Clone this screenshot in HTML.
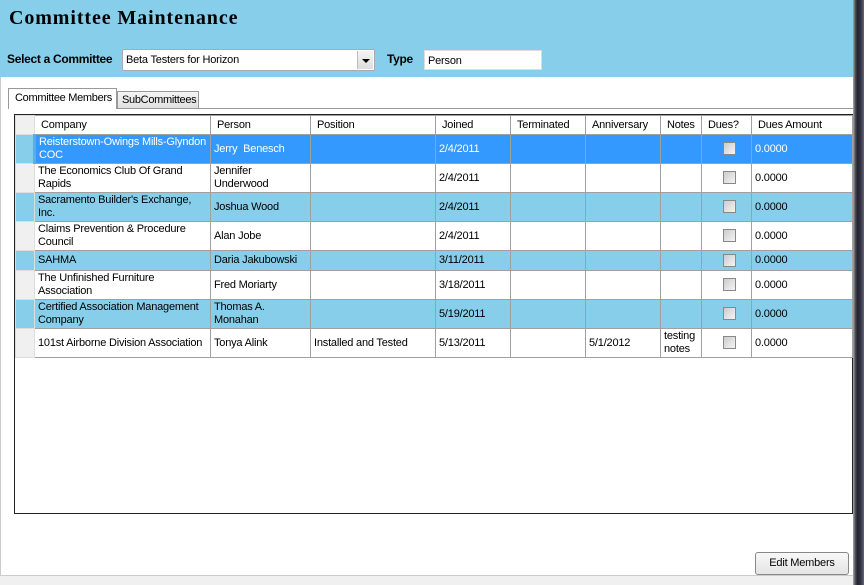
<!DOCTYPE html>
<html><head><meta charset="utf-8"><style>
*{margin:0;padding:0;box-sizing:border-box}
body{width:864px;height:585px;background:#fff;position:relative;overflow:hidden;font-family:"Liberation Sans",sans-serif;font-size:11px;color:#000}
.a{position:absolute}
#hdr{left:0;top:0;width:855px;height:77px;background:#87ceeb}
h1{position:absolute;left:9px;top:7px;font-family:"Liberation Serif",serif;font-size:20px;font-weight:bold;letter-spacing:.9px}
.lbl{font-weight:bold;font-size:12px;letter-spacing:-.3px}
.box{background:#fff;border:1px solid #aaa;font-size:11px;padding:4px 3px 0;letter-spacing:-.2px}
table{border-collapse:collapse;table-layout:fixed;position:absolute;left:15px;top:115px}
td,th{border:1px solid #a0a0a0;font-weight:normal;text-align:left;padding:0 3px;vertical-align:middle;line-height:13px;overflow:hidden;letter-spacing:-.2px}
th{height:19px;background:#fff;padding-left:6px}
td.s{background:#f0f0f0;border-color:#ddd}
tr.b td{background:#87ceeb}
tr.sel td{background:#3399ff;color:#fff}
tr.sel td.s{background:#87ceeb;border-right:3px solid #5aaee0}
.cb{display:inline-block;width:13px;height:13px;border:1px solid #888;background:linear-gradient(135deg,#ccc,#f4f4f4);margin-left:18px;vertical-align:middle}
</style></head><body>
<div id="hdr" class="a">
<h1>Committee Maintenance</h1>
<div class="a lbl" style="left:7px;top:52px">Select a Committee</div>
<div class="a box" style="left:122px;top:49px;width:253px;height:22px;border-radius:2px">Beta Testers for Horizon
<div class="a" style="right:1px;top:1px;width:16px;height:18px;background:linear-gradient(#f4f4f4,#ddd);border-left:1px solid #bbb"><div class="a" style="left:4px;top:8px;border-left:4px solid transparent;border-right:4px solid transparent;border-top:4px solid #000"></div></div></div>
<div class="a lbl" style="left:387px;top:52px">Type</div>
<div class="a box" style="left:424px;top:50px;width:118px;height:20px;border-color:#ddd">Person</div>
</div>
<div class="a" style="left:0;top:77px;width:1px;height:508px;background:#ccc"></div>
<div class="a" style="left:853px;top:0;width:11px;height:585px;background:linear-gradient(90deg,#aaa,#555 20%,#223 40%,#334 70%,#667)"></div>
<div class="a" style="left:0;top:575px;width:853px;height:10px;background:#f0f0f0;border-top:1px solid #ccc"></div>
<div class="a" style="left:8px;top:108px;width:845px;height:467px;border-top:1px solid #999"></div>
<div class="a" style="left:8px;top:88px;width:109px;height:21px;background:#fff;border:1px solid #999;border-bottom:none;padding:3px 6px;letter-spacing:-.3px;white-space:nowrap">Committee Members</div>
<div class="a" style="left:117px;top:91px;width:82px;height:18px;background:linear-gradient(#f4f4f4,#e0e0e0);border:1px solid #999;padding:2px 4px;letter-spacing:-.3px;white-space:nowrap">SubCommittees</div>
<div class="a" style="left:14px;top:114px;width:839px;height:400px;border:1px solid #222"></div>
<table>
<colgroup><col style="width:19px"><col style="width:176px"><col style="width:100px"><col style="width:125px"><col style="width:75px"><col style="width:75px"><col style="width:75px"><col style="width:41px"><col style="width:50px"><col style="width:101px"></colgroup>
<tr><th class="s" style="background:#f0f0f0;border-color:#ddd"></th><th>Company</th><th>Person</th><th>Position</th><th>Joined</th><th>Terminated</th><th>Anniversary</th><th>Notes</th><th>Dues?</th><th>Dues Amount</th></tr>
<tr class="sel" style="height:29px"><td class="s"></td><td>Reisterstown-Owings Mills-Glyndon COC</td><td>Jerry&nbsp; Benesch</td><td></td><td>2/4/2011</td><td></td><td></td><td></td><td><span class="cb"></span></td><td>0.0000</td></tr>
<tr style="height:29px"><td class="s"></td><td>The Economics Club Of Grand Rapids</td><td>Jennifer Underwood</td><td></td><td>2/4/2011</td><td></td><td></td><td></td><td><span class="cb"></span></td><td>0.0000</td></tr>
<tr class="b" style="height:29px"><td class="s"></td><td>Sacramento Builder's Exchange, Inc.</td><td>Joshua Wood</td><td></td><td>2/4/2011</td><td></td><td></td><td></td><td><span class="cb"></span></td><td>0.0000</td></tr>
<tr style="height:29px"><td class="s"></td><td>Claims Prevention &amp; Procedure Council</td><td>Alan Jobe</td><td></td><td>2/4/2011</td><td></td><td></td><td></td><td><span class="cb"></span></td><td>0.0000</td></tr>
<tr class="b" style="height:20px"><td class="s"></td><td>SAHMA</td><td>Daria Jakubowski</td><td></td><td>3/11/2011</td><td></td><td></td><td></td><td><span class="cb"></span></td><td>0.0000</td></tr>
<tr style="height:29px"><td class="s"></td><td>The Unfinished Furniture Association</td><td>Fred Moriarty</td><td></td><td>3/18/2011</td><td></td><td></td><td></td><td><span class="cb"></span></td><td>0.0000</td></tr>
<tr class="b" style="height:29px"><td class="s"></td><td>Certified Association Management Company</td><td>Thomas A. Monahan</td><td></td><td>5/19/2011</td><td></td><td></td><td></td><td><span class="cb"></span></td><td>0.0000</td></tr>
<tr style="height:29px"><td class="s"></td><td>101st Airborne Division Association</td><td>Tonya Alink</td><td>Installed and Tested</td><td>5/13/2011</td><td></td><td>5/1/2012</td><td>testing notes</td><td><span class="cb"></span></td><td>0.0000</td></tr>
</table>
<div class="a" style="left:755px;top:552px;width:94px;height:23px;border:1px solid #888;border-radius:3px;background:linear-gradient(#f8f8f8,#e4e4e4);text-align:center;line-height:21px;letter-spacing:-.2px">Edit Members</div>
</body></html>
